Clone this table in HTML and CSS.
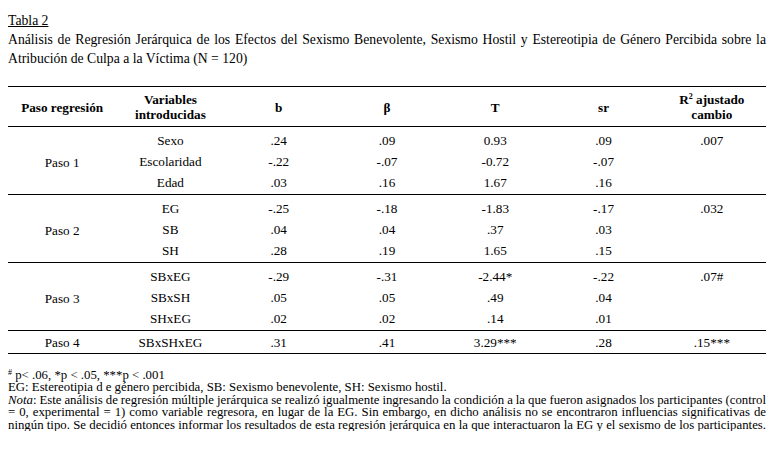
FILE: index.html
```html
<!DOCTYPE html>
<html lang="es">
<head>
<meta charset="utf-8">
<title>Tabla 2</title>
<link rel="stylesheet" href="styles.css">
</head>
<body>
<div class="caption-label">Tabla 2</div>
<p class="caption-title">Análisis de Regresión Jerárquica de los Efectos del Sexismo Benevolente, Sexismo Hostil y Estereotipia de Género Percibida sobre la Atribución de Culpa a la Víctima (N = 120)</p>

<table class="reg">
  <colgroup>
    <col><col><col><col><col><col><col>
  </colgroup>
  <thead>
    <tr>
      <th>Paso regresión</th>
      <th>Variables<br>introducidas</th>
      <th>b</th>
      <th>β</th>
      <th>T</th>
      <th>sr</th>
      <th>R<sup class="sq">2</sup> ajustado<br>cambio</th>
    </tr>
  </thead>
  <tbody>
    <tr class="first"><td rowspan="3" class="paso">Paso 1</td><td>Sexo</td><td>.24</td><td>.09</td><td>0.93</td><td>.09</td><td>.007</td></tr>
    <tr><td>Escolaridad</td><td>-.22</td><td>-.07</td><td>-0.72</td><td>-.07</td><td></td></tr>
    <tr class="last"><td>Edad</td><td>.03</td><td>.16</td><td>1.67</td><td>.16</td><td></td></tr>
  </tbody>
  <tbody>
    <tr class="first"><td rowspan="3" class="paso">Paso 2</td><td>EG</td><td>-.25</td><td>-.18</td><td>-1.83</td><td>-.17</td><td>.032</td></tr>
    <tr><td>SB</td><td>.04</td><td>.04</td><td>.37</td><td>.03</td><td></td></tr>
    <tr class="last"><td>SH</td><td>.28</td><td>.19</td><td>1.65</td><td>.15</td><td></td></tr>
  </tbody>
  <tbody>
    <tr class="first"><td rowspan="3" class="paso">Paso 3</td><td>SBxEG</td><td>-.29</td><td>-.31</td><td>-2.44*</td><td>-.22</td><td>.07#</td></tr>
    <tr><td>SBxSH</td><td>.05</td><td>.05</td><td>.49</td><td>.04</td><td></td></tr>
    <tr class="last"><td>SHxEG</td><td>.02</td><td>.02</td><td>.14</td><td>.01</td><td></td></tr>
  </tbody>
  <tbody>
    <tr class="single"><td class="paso">Paso 4</td><td>SBxSHxEG</td><td>.31</td><td>.41</td><td>3.29***</td><td>.28</td><td>.15***</td></tr>
  </tbody>
</table>

<div class="notes">
  <div class="ln"><sup class="hash">#</sup> p&lt; .06, *p &lt; .05, ***p &lt; .001</div>
  <div class="ln">EG: Estereotipia d e género percibida, SB: Sexismo benevolente, SH: Sexismo hostil.</div>
  <div class="ln just tight"><em>Nota</em>: Este análisis de regresión múltiple jerárquica se realizó igualmente ingresando la condición a la que fueron asignados los participantes (control</div>
  <div class="ln just">= 0, experimental = 1) como variable regresora, en lugar de la EG. Sin embargo, en dicho análisis no se encontraron influencias significativas de</div>
  <div class="ln just">ningún tipo. Se decidió entonces informar los resultados de esta regresión jerárquica en la que interactuaron la EG y el sexismo de los participantes.</div>
</div>
</body>
</html>
```
FILE: styles.css
```css
html, body {
  background: #fff;
}

body {
  margin: 0;
  padding: 11px 13px 0 8px;
  font-family: "Liberation Serif", "Times New Roman", serif;
  color: #000;
}

.caption-label {
  font-size: 13.7px;
  line-height: 19px;
  text-decoration: underline;
}

.caption-title {
  margin: 0;
  font-size: 13.7px;
  line-height: 19px;
  text-align: justify;
}

.reg {
  width: 100%;
  margin-top: 18px;
  border-collapse: collapse;
  table-layout: fixed;
  font-family: "Liberation Serif", "Times New Roman", serif;
  font-size: 13.2px;
  border-top: 1px solid #000;
  border-bottom: 1px solid #000;
}

.reg th {
  font-weight: bold;
  line-height: 15px;
  padding: 5px 0 4px;
  text-align: center;
  vertical-align: middle;
  border-bottom: 1px solid #000;
}

.reg .sq {
  font-size: 8px;
  vertical-align: 5px;
  line-height: 0;
}

.reg tbody {
  border-top: 1px solid #000;
}

.reg td {
  line-height: 21px;
  padding: 0;
  text-align: center;
  vertical-align: middle;
}

.reg tr.first td {
  padding-top: 3px;
}

.reg tr.last td {
  padding-bottom: 1px;
}

.reg tr.single td {
  padding-top: 1px;
  padding-bottom: 0;
}

.reg td.paso {
  padding: 0;
}

.notes {
  margin-top: 15px;
  font-family: "Liberation Serif", "Times New Roman", serif;
  font-size: 12.8px;
  line-height: 12.4px;
}

.notes .ln {
  white-space: nowrap;
}

.notes .just {
  text-align: justify;
  text-align-last: justify;
}

.notes .tight {
  word-spacing: -0.6px;
}

.notes .hash {
  font-size: 8px;
  vertical-align: 4px;
  line-height: 0;
}
```
